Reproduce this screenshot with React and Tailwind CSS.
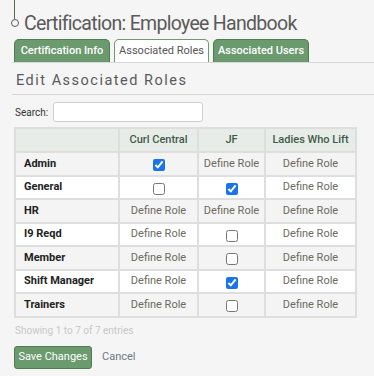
import { useState } from 'react';

const COLUMNS = ['Curl Central', 'JF', 'Ladies Who Lift'];

// null = "Define Role", true/false = checkbox state
const ROWS = [
    { name: 'Admin', cells: [true, null, null] },
    { name: 'General', cells: [false, true, null] },
    { name: 'HR', cells: [null, null, null] },
    { name: 'I9 Reqd', cells: [null, false, null] },
    { name: 'Member', cells: [null, false, null] },
    { name: 'Shift Manager', cells: [null, true, null] },
    { name: 'Trainers', cells: [null, false, null] },
];

const FONT = { fontFamily: 'Roboto, "Noto Sans", Arial, sans-serif' };

export default function App() {
    const [rows, setRows] = useState(ROWS);

    const toggle = (ri, ci) => {
        setRows(rows.map((r, i) => i !== ri ? r : { ...r, cells: r.cells.map((c, j) => j === ci ? !c : c) }));
    };

    return (
        <div className="w-[374px] h-[376px] bg-[#f5f5f5] overflow-hidden text-[#555]" style={FONT}>
            {/* Title with hanging line */}
            <div className="relative h-[36px] pl-[24px] pt-[12px]">
                <span className="absolute left-[14px] top-0 w-px h-[19px] bg-[#4b6e4d]" />
                <span className="absolute left-[11px] top-[19px] w-[8px] h-[8px] rounded-full border border-[#55606a]" />
                <h1 className="text-[19.5px] leading-[24px] tracking-[-0.7px] text-[#5a5a5a] whitespace-nowrap">Certification: Employee Handbook</h1>
            </div>

            {/* Tabs */}
            <div className="flex items-end gap-[4px] pl-[2px] h-[27px] border-b border-[#d8d8d8] ml-[12px]">
                <div className="w-[96px] h-[23px] rounded-t-[5px] bg-[#6a9a6e] border border-[#4f7c53] border-b-0 flex items-center justify-center text-white text-[11px] font-medium whitespace-nowrap">Certification Info</div>
                <div className="w-[95px] h-[23px] rounded-t-[5px] bg-white border border-[#6a9a6e] border-b-0 flex items-center justify-center text-[#555] text-[11px] whitespace-nowrap">Associated Roles</div>
                <div className="w-[96px] h-[23px] rounded-t-[5px] bg-[#6a9a6e] border border-[#4f7c53] border-b-0 flex items-center justify-center text-white text-[11px] font-medium whitespace-nowrap">Associated Users</div>
            </div>

            {/* Section heading */}
            <div className="ml-[12px] h-[32px] border-b border-[#d8d8d8] pl-[4px] pt-[8px]">
                <h2 className="text-[14.5px] leading-[20px] tracking-[1.5px] text-[#5a5a5a] whitespace-nowrap">Edit Associated Roles</h2>
            </div>

            {/* Search */}
            <div className="flex items-center gap-[5px] pl-[15px] mt-[7px] h-[20px]">
                <label className="text-[10px] text-[#333]">Search:</label>
                <input type="text" className="w-[150px] h-[20px] bg-white border border-[#cfcfcf] rounded-[3px] outline-none" />
            </div>

            {/* Table */}
            <table className="ml-[14px] mt-[5px] w-[343px] table-fixed border-collapse border-2 border-[#dedede] text-[11px]">
                <thead>
                    <tr className="h-[24px] bg-[#e8ece8] text-[#3f5a48]">
                        <th className="w-[104px] border-2 border-[#dedede]" />
                        <th className="w-[79px] border-2 border-[#dedede] font-medium whitespace-nowrap">{COLUMNS[0]}</th>
                        <th className="w-[67px] border-2 border-[#dedede] font-medium whitespace-nowrap">{COLUMNS[1]}</th>
                        <th className="border-2 border-[#dedede] font-medium whitespace-nowrap">{COLUMNS[2]}</th>
                    </tr>
                </thead>
                <tbody>
                    {rows.map((r, ri) => (
                        <tr key={r.name} className={`h-[23.5px] ${ri % 2 === 0 ? 'bg-[#f4f4f4]' : 'bg-white'}`}>
                            <td className="border-2 border-[#dedede] pl-[8px] font-bold text-[#222] whitespace-nowrap">{r.name}</td>
                            {r.cells.map((c, ci) => (
                                <td key={ci} className="border-2 border-[#dedede] text-center text-[#6b6b5e] whitespace-nowrap">
                                    {c === null ? 'Define Role' : (
                                        <input
                                            type="checkbox"
                                            checked={c}
                                            onChange={() => toggle(ri, ci)}
                                            className="w-[12px] h-[12px] align-middle mt-[3px] accent-[#1a73e8]"
                                        />
                                    )}
                                </td>
                            ))}
                        </tr>
                    ))}
                </tbody>
            </table>

            <div className="pl-[15px] mt-[5px] text-[10px] text-[#c8c8c8]">Showing 1 to 7 of 7 entries</div>

            {/* Actions */}
            <div className="flex items-center gap-[10px] pl-[14px] mt-[8px]">
                <button className="w-[78px] h-[23px] rounded-[3px] bg-[#6a9a6e] border border-[#4f7c53] text-white text-[11px] whitespace-nowrap">Save Changes</button>
                <button className="text-[11px] text-[#6a7a86]">Cancel</button>
            </div>
        </div>
    );
}
